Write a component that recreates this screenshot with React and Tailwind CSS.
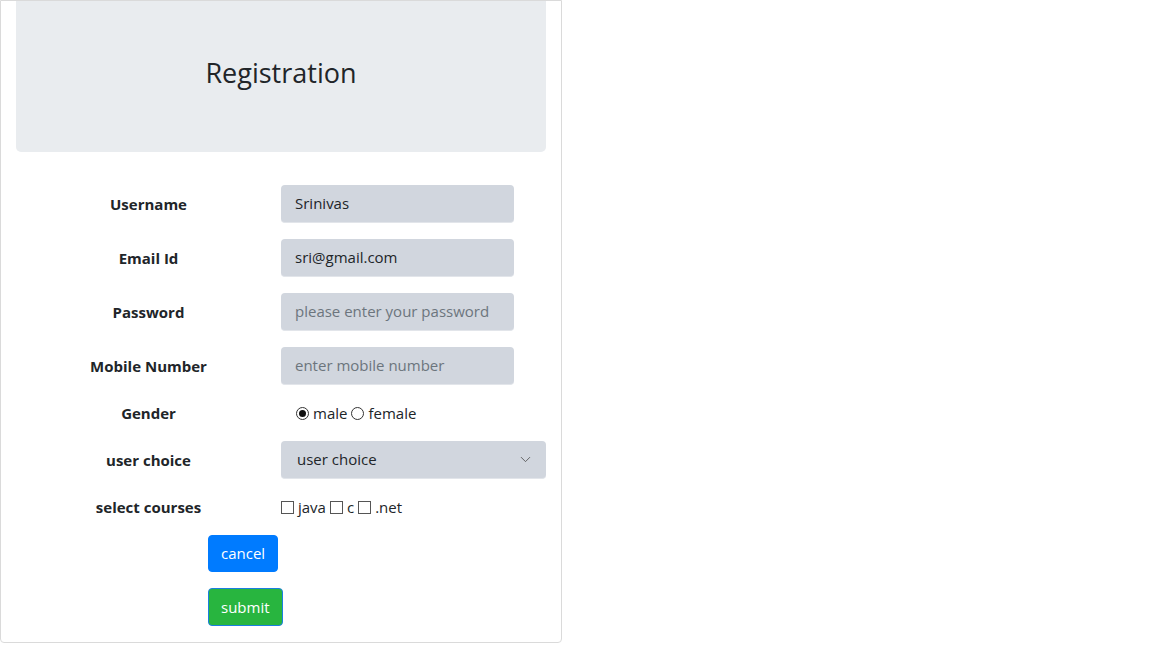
import { ChevronDown } from 'lucide-react';

const fields = [
    { label: 'Username', value: 'Srinivas' },
    { label: 'Email Id', value: 'sri@gmail.com' },
    { label: 'Password', placeholder: 'please enter your password' },
    { label: 'Mobile Number', placeholder: 'enter mobile number' },
];

function Label({ children }) {
    return <div className="w-[265px] text-center font-bold text-[15px] text-[#212529]">{children}</div>;
}

function Radio({ checked }) {
    return (
        <span className="inline-flex items-center justify-center w-[13px] h-[13px] rounded-full border border-[#333] bg-white mr-[4px]">
            {checked && <span className="w-[7px] h-[7px] rounded-full bg-[#111]" />}
        </span>
    );
}

function Check() {
    return <span className="inline-block w-[13px] h-[13px] border border-[#555] bg-white mr-[4px]" />;
}

export default function App() {
    return (
        <div className="w-[562px] border border-t border-[#dadada] rounded-b-[4px] text-[#212529]" style={{ fontFamily: '"Open Sans", "Noto Sans", sans-serif' }}>
            <div className="mx-[15px] h-[151px] bg-[#e9ecef] rounded-b-[5px] flex items-center justify-center">
                <h2 className="text-[27px] text-[#212529] mt-[-6px]">Registration</h2>
            </div>

            <div className="flex flex-col gap-[16px] pt-[33px] pb-[16px] pl-[15px]">
                {fields.map((f) => (
                    <div key={f.label} className="flex items-center">
                        <Label>{f.label}</Label>
                        <div className="w-[233px] h-[38px] bg-[#d1d6de] rounded-[4px] border-b border-[#e2e5ea] flex items-center px-[14px] text-[15px] whitespace-nowrap overflow-hidden">
                            {f.value ? (
                                <span className="text-[#212529]">{f.value}</span>
                            ) : (
                                <span className="text-[#6c757d]">{f.placeholder}</span>
                            )}
                        </div>
                    </div>
                ))}

                <div className="flex items-center h-[24px]">
                    <Label>Gender</Label>
                    <div className="flex items-center pl-[15px] text-[15px]">
                        <Radio checked />
                        <span className="mr-[4px]">male</span>
                        <Radio />
                        <span>female</span>
                    </div>
                </div>

                <div className="flex items-center">
                    <Label>user choice</Label>
                    <div className="w-[265px] h-[38px] bg-[#d1d6de] rounded-[4px] border-b border-[#e2e5ea] flex items-center justify-between pl-[16px] pr-[12px] text-[15px]">
                        <span>user choice</span>
                        <ChevronDown size={17} strokeWidth={1.25} className="text-[#555]" />
                    </div>
                </div>

                <div className="flex items-center h-[24px]">
                    <Label>select courses</Label>
                    <div className="flex items-center text-[15px]">
                        <Check />
                        <span className="mr-[4px]">java</span>
                        <Check />
                        <span className="mr-[4px]">c</span>
                        <Check />
                        <span>.net</span>
                    </div>
                </div>

                <div className="pl-[192px]">
                    <button className="h-[37px] px-[12px] bg-[#007bff] text-white text-[15px] rounded-[4px] border border-[#007bff]">cancel</button>
                </div>
                <div className="pl-[192px]">
                    <button className="h-[38px] px-[12px] bg-[#28b53f] text-white text-[15px] rounded-[4px] border border-[#1a7fe0]">submit</button>
                </div>
            </div>
        </div>
    );
}
